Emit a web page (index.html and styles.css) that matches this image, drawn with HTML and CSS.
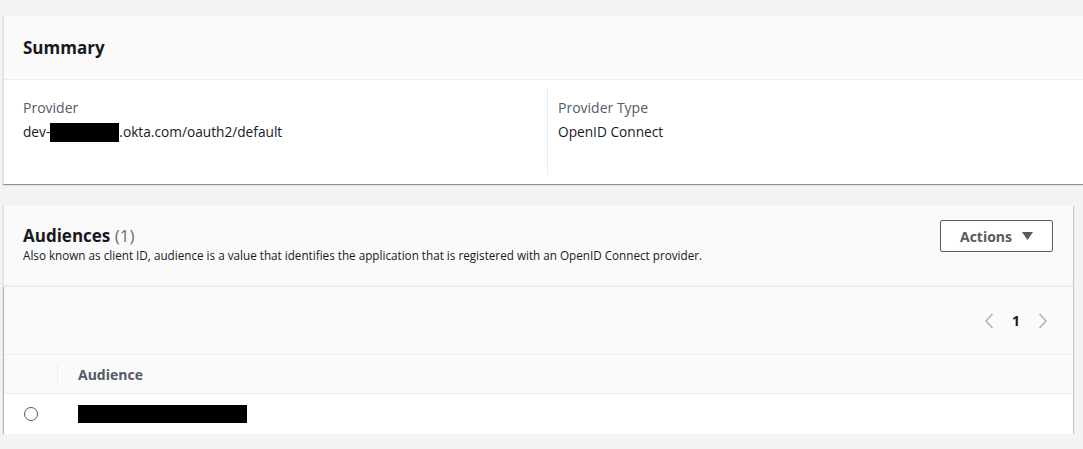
FILE: index.html
```html
<!DOCTYPE html>
<html>
<head>
<meta charset="utf-8">
<link rel="stylesheet" href="styles.css">
</head>
<body>
<div class="page">
  <section class="card card-summary">
    <div class="card-header">
      <h2 class="title">Summary</h2>
    </div>
    <div class="summary-body">
      <div class="col">
        <div class="label">Provider</div>
        <div class="value">dev-<span class="redact redact-provider"></span>.okta.com/oauth2/default</div>
      </div>
      <div class="col col-divided">
        <div class="label">Provider Type</div>
        <div class="value">OpenID Connect</div>
      </div>
    </div>
  </section>

  <section class="card card-audiences">
    <div class="card-header aud-header">
      <div class="aud-text">
        <h2 class="title">Audiences <span class="count">(1)</span></h2>
        <p class="desc">Also known as client ID, audience is a value that identifies the application that is registered with an OpenID Connect provider.</p>
      </div>
      <button class="btn">Actions <svg class="caret" width="11" height="8" viewBox="0 0 11 8"><path d="M0 0 H11 L5.5 8 Z" fill="#545b64"/></svg></button>
    </div>
    <div class="table-wrap">
      <div class="pager">
        <svg class="chev" width="10" height="16" viewBox="0 0 10 16"><path d="M8.5 1 L2 8 L8.5 15" fill="none" stroke="#aab7b8" stroke-width="1.6"/></svg>
        <span class="page-num">1</span>
        <svg class="chev" width="10" height="16" viewBox="0 0 10 16"><path d="M1.5 1 L8 8 L1.5 15" fill="none" stroke="#aab7b8" stroke-width="1.6"/></svg>
      </div>
      <div class="thead">
        <div class="cell-sel"><span class="sep"></span></div>
        <div class="th">Audience</div>
      </div>
      <div class="trow">
        <div class="cell-sel"><span class="radio"></span></div>
        <div class="td"><span class="redact redact-aud"></span></div>
      </div>
    </div>
  </section>
</div>
</body>
</html>
```
FILE: styles.css
```css
html, body {
  margin: 0;
  padding: 0;
  background: #f2f3f3;
  font-family: "Open Sans", "Noto Sans", sans-serif;
  color: #16191f;
  overflow: hidden;
}
.page {
  padding-top: 16px;
  padding-left: 3px;
  width: 1100px;
}
.card {
  background: #fff;
  border-left: 1px solid #e1e4e4;
  box-shadow: 0 1px 1px 0 rgba(0, 28, 36, 0.35), 1px 1px 1px 0 rgba(0, 28, 36, 0.15);
}
.card-summary {
  width: 1090px;
}
.card-audiences {
  width: 1069px;
  margin-top: 21px;
}
.card-header {
  background: #fafafa;
  border-bottom: 1px solid #eaeded;
  padding: 0 19px;
}
.card-summary .card-header {
  height: 63px;
  display: flex;
  align-items: center;
}
.title {
  margin: 0;
  font-size: 17px;
  font-weight: 700;
  line-height: 22px;
  color: #16191f;
}
.count {
  font-weight: 400;
  color: #687078;
}
.summary-body {
  display: flex;
  padding: 8px 0 10px;
  height: 86px;
}
.col {
  width: 543px;
  box-sizing: border-box;
  padding: 10px 19px 0;
}
.col-divided {
  border-left: 1px solid #eaeded;
  padding-left: 10px;
}
.label {
  font-size: 14px;
  line-height: 20px;
  color: #545b64;
}
.value {
  font-size: 13.7px;
  line-height: 20px;
  margin-top: 4px;
  color: #16191f;
  display: flex;
  align-items: center;
}
.redact {
  display: inline-block;
  background: #000;
}
.redact-provider {
  width: 69px;
  height: 19px;
}
.aud-header {
  height: 82px;
  display: flex;
  justify-content: space-between;
  align-items: flex-start;
  box-sizing: border-box;
  border-bottom: 2px solid #eaeded;
}
.aud-text {
  padding-top: 20px;
}
.desc {
  margin: 0;
  font-size: 11.7px;
  line-height: 16px;
  color: #16191f;
}
.btn {
  margin-top: 15px;
  margin-right: 1px;
  width: 113px;
  height: 32px;
  background: #fff;
  border: 1px solid #545b64;
  border-radius: 2px;
  font-family: inherit;
  font-weight: 700;
  font-size: 14px;
  color: #545b64;
  display: flex;
  align-items: center;
  justify-content: center;
  gap: 10px;
  padding: 0;
}
.caret {
  display: block;
}
.table-wrap {
  border-left: 1px solid #aab7b8;
  margin-left: -1px;
}
.pager {
  height: 67px;
  background: #fafafa;
  border-bottom: 1px solid #eaeded;
  display: flex;
  align-items: center;
  justify-content: flex-end;
  padding-right: 25px;
  gap: 18px;
}
.page-num {
  font-weight: 700;
  font-size: 14px;
  color: #16191f;
}
.chev {
  display: block;
}
.thead {
  height: 38px;
  background: #fafafa;
  border-bottom: 1px solid #eaeded;
  display: flex;
  align-items: center;
}
.cell-sel {
  width: 54px;
  height: 100%;
  display: flex;
  align-items: center;
  justify-content: center;
  position: relative;
}
.sep {
  position: absolute;
  right: 0;
  top: 9px;
  bottom: 9px;
  border-left: 1px solid #eaeded;
}
.th {
  padding-left: 20px;
  font-weight: 700;
  font-size: 14px;
  color: #545b64;
}
.trow {
  height: 40px;
  display: flex;
  align-items: center;
}
.radio {
  border: 1px solid #545b64;
  border-radius: 50%;
  box-sizing: border-box;
  width: 14px;
  height: 14px;
}
.td {
  padding-left: 20px;
  display: flex;
  align-items: center;
}
.redact-aud {
  width: 169px;
  height: 18px;
}
```
